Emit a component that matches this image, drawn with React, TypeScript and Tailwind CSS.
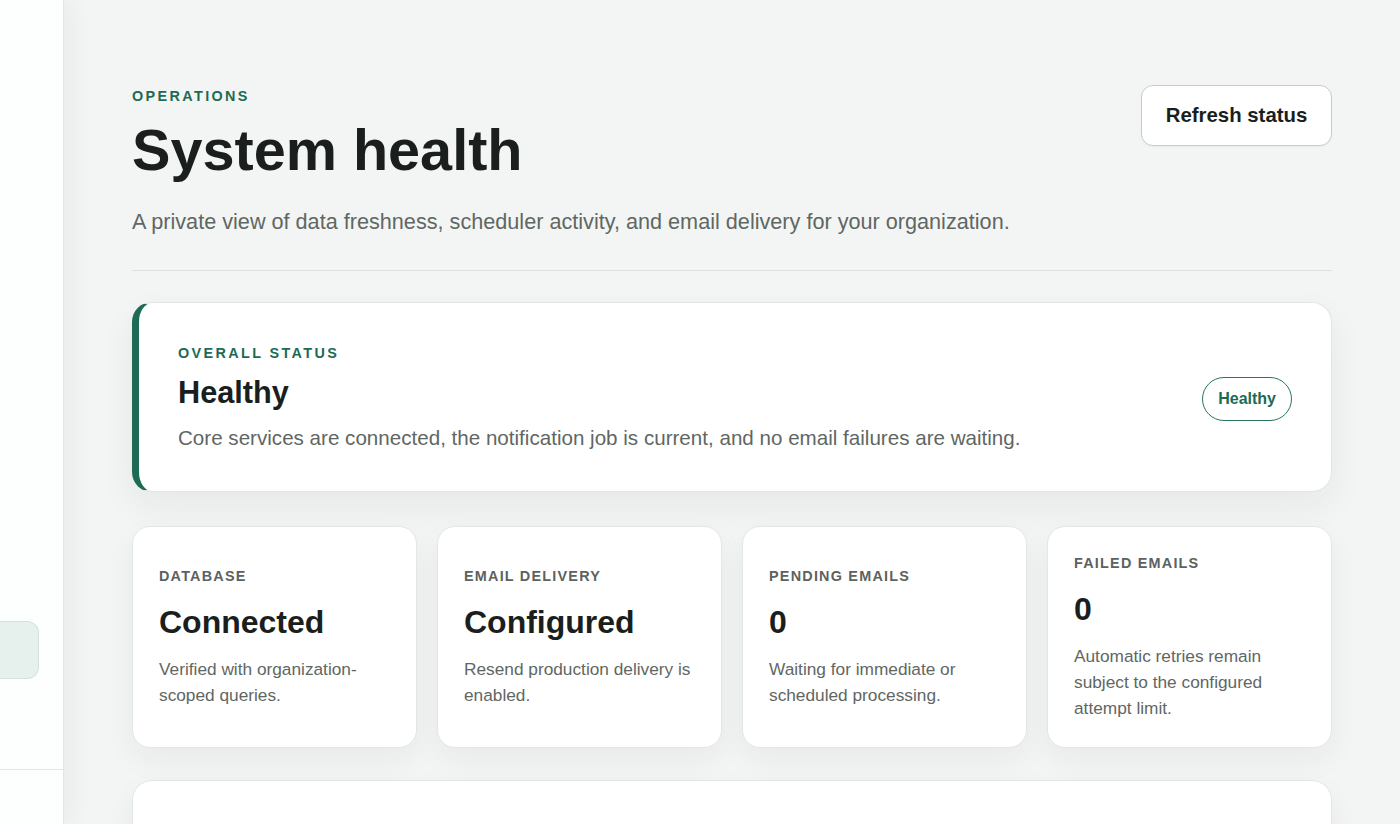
export default function App() {
  const stats = [
    {
      label: "Database",
      value: "Connected",
      desc: "Verified with organization-scoped queries.",
    },
    {
      label: "Email delivery",
      value: "Configured",
      desc: "Resend production delivery is enabled.",
    },
    {
      label: "Pending emails",
      value: "0",
      desc: "Waiting for immediate or scheduled processing.",
    },
    {
      label: "Failed emails",
      value: "0",
      desc: "Automatic retries remain subject to the configured attempt limit.",
    },
  ];

  return (
    <div className="flex h-[824px] overflow-hidden bg-[#f3f5f4] font-['Liberation_Sans',Arial,sans-serif] text-[#1a1f1d]">
      <aside className="relative z-10 flex w-[64px] shrink-0 flex-col border-r border-[#e2e6e4] bg-[#fdfefe] shadow-[6px_0_24px_rgba(20,40,30,0.05)]">
        <div className="h-[621px]" />
        <div className="h-[58px] w-[39px] rounded-r-[12px] border border-l-0 border-[#d2e2de] bg-[#e6f0ed]" />
        <div className="mt-[90px] border-t border-[#e1e5e3]" />
      </aside>

      <main className="min-w-0 flex-1 overflow-hidden">
        <div className="mx-auto max-w-[1200px] pt-[85px]">
          <header className="flex items-start justify-between">
            <div className="pt-[2.5px]">
              <p className="text-[14.4px] font-bold uppercase leading-[17px] tracking-[0.165em] text-[#1d6b55]">
                Operations
              </p>
              <h1 className="mt-[14px] text-[57.6px] font-bold leading-[1.1] text-[#1a1f1d]">
                System health
              </h1>
              <p className="mt-[24px] text-[21.65px] leading-[32px] text-[#5f6763]">
                A private view of data freshness, scheduler activity, and email delivery for your organization.
              </p>
            </div>
            <button className="h-[61px] w-[191px] rounded-[12px] border border-[#c7cccb] bg-white text-[20.4px] font-bold text-[#1a1f1d] shadow-[0_1px_2px_rgba(0,0,0,0.04)]">
              Refresh status
            </button>
          </header>

          <div className="mt-[32px] border-t border-[#dde1df]" />

          <section className="mt-[31px] flex items-center justify-between rounded-[20px] border border-l-[7px] border-[#e1e6e4] border-l-[#1d6b55] bg-white pb-[38px] pl-[39px] pr-[39px] pt-[42px] shadow-[0_14px_36px_rgba(16,40,30,0.06)]">
            <div>
              <p className="text-[14.4px] font-bold uppercase leading-[17px] tracking-[0.165em] text-[#1d6b55]">
                Overall status
              </p>
              <h2 className="mt-[12px] text-[30.7px] font-bold leading-[37px] text-[#1a1f1d]">
                Healthy
              </h2>
              <p className="mt-[12px] text-[20.6px] leading-[30px] text-[#5f6763]">
                Core services are connected, the notification job is current, and no email failures are waiting.
              </p>
            </div>
            <span className="flex h-[44px] items-center rounded-full border-[1.5px] border-[#2b7560] px-[15px] text-[16px] font-bold text-[#1d6b55]">
              Healthy
            </span>
          </section>

          <div className="mt-[34px] grid grid-cols-4 gap-5">
            {stats.map((s) => (
              <div
                key={s.label}
                className="flex flex-col justify-center rounded-[18px] border border-[#e2e6e4] bg-white px-[26px] pb-[26px] pt-[28px] shadow-[0_12px_30px_rgba(16,40,30,0.05)]"
              >
                <p className="text-[14.4px] font-bold uppercase leading-[17px] tracking-[0.085em] text-[#5b625f]">
                  {s.label}
                </p>
                <p className="mt-[18.5px] text-[32px] font-bold leading-[38px] text-[#1a1f1d]">
                  {s.value}
                </p>
                <p className="mt-[15px] text-[17.28px] leading-[26px] text-[#5f6763]">
                  {s.desc}
                </p>
              </div>
            ))}
          </div>

          <div className="mt-[32px] h-[200px] rounded-[20px] border border-[#e2e6e4] bg-white shadow-[0_12px_30px_rgba(16,40,30,0.05)]" />
        </div>
      </main>
    </div>
  );
}
